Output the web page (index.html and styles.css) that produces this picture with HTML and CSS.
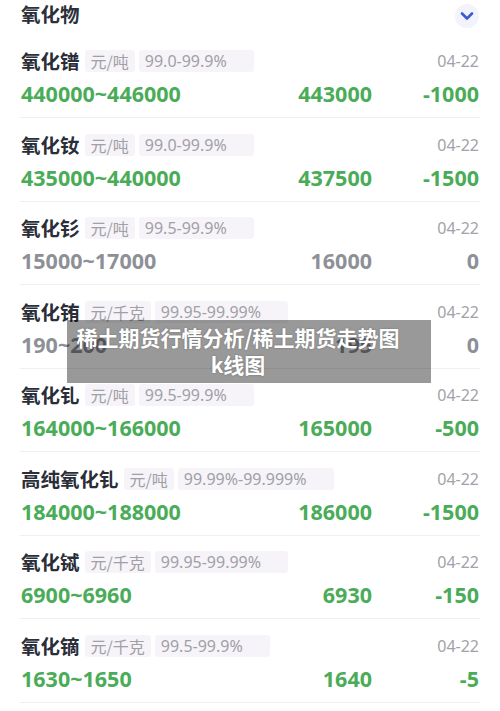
FILE: index.html
```html
<!DOCTYPE html>
<html lang="zh-CN">
<head>
<meta charset="utf-8">
<title>氧化物</title>
<link rel="stylesheet" href="styles.css">
</head>
<body>
<div class="page">
  <div class="header">
    <span class="title">氧化物</span>
    <span class="toggle">
      <svg width="14" height="10" viewBox="0 0 14 10"><path d="M2 2.5 L7 7.5 L12 2.5" fill="none" stroke="#3b5ad6" stroke-width="2.6" stroke-linecap="round" stroke-linejoin="round"/></svg>
    </span>
  </div>
  <div class="list">
    <div class="row">
      <div class="line1"><span class="name">氧化镨</span><span class="tag unit">元/吨</span><span class="tag spec">99.0-99.9%</span><span class="date">04-22</span></div>
      <div class="line2 green"><span>440000~446000</span><span class="mid">443000</span><span class="chg">-1000</span></div>
    </div>
    <div class="row">
      <div class="line1"><span class="name">氧化钕</span><span class="tag unit">元/吨</span><span class="tag spec">99.0-99.9%</span><span class="date">04-22</span></div>
      <div class="line2 green"><span>435000~440000</span><span class="mid">437500</span><span class="chg">-1500</span></div>
    </div>
    <div class="row">
      <div class="line1"><span class="name">氧化钐</span><span class="tag unit">元/吨</span><span class="tag spec">99.5-99.9%</span><span class="date">04-22</span></div>
      <div class="line2 gray"><span>15000~17000</span><span class="mid">16000</span><span class="chg">0</span></div>
    </div>
    <div class="row">
      <div class="line1"><span class="name">氧化铕</span><span class="tag unit">元/千克</span><span class="tag spec">99.95-99.99%</span><span class="date">04-22</span></div>
      <div class="line2 gray"><span>190~200</span><span class="mid">195</span><span class="chg">0</span></div>
    </div>
    <div class="row">
      <div class="line1"><span class="name">氧化钆</span><span class="tag unit">元/吨</span><span class="tag spec">99.5-99.9%</span><span class="date">04-22</span></div>
      <div class="line2 green"><span>164000~166000</span><span class="mid">165000</span><span class="chg">-500</span></div>
    </div>
    <div class="row">
      <div class="line1"><span class="name">高纯氧化钆</span><span class="tag unit">元/吨</span><span class="tag spec">99.99%-99.999%</span><span class="date">04-22</span></div>
      <div class="line2 green"><span>184000~188000</span><span class="mid">186000</span><span class="chg">-1500</span></div>
    </div>
    <div class="row">
      <div class="line1"><span class="name">氧化铽</span><span class="tag unit">元/千克</span><span class="tag spec">99.95-99.99%</span><span class="date">04-22</span></div>
      <div class="line2 green"><span>6900~6960</span><span class="mid">6930</span><span class="chg">-150</span></div>
    </div>
    <div class="row">
      <div class="line1"><span class="name">氧化镝</span><span class="tag unit">元/千克</span><span class="tag spec">99.5-99.9%</span><span class="date">04-22</span></div>
      <div class="line2 green"><span>1630~1650</span><span class="mid">1640</span><span class="chg">-5</span></div>
    </div>
  </div>
  <div class="banner">稀土期货行情分析/稀土期货走势图<br>k线图</div>
</div>
</body>
</html>
```

FILE: styles.css
```css
html, body {
  margin: 0;
  padding: 0;
  background: #ffffff;
}
body {
  font-family: "Noto Sans", "Noto Sans CJK SC", sans-serif;
  width: 500px;
  height: 711px;
  overflow: hidden;
}
.page {
  position: relative;
  height: 711px;
}
.header {
  height: 34.5px;
  box-sizing: border-box;
  padding: 0 21px;
  display: flex;
  align-items: center;
  justify-content: space-between;
  margin-top: -4px;
  margin-bottom: 4px;
}
.title {
  font-family: "Noto Sans CJK SC", sans-serif;
  font-weight: 700;
  font-size: 19.5px;
  color: #2c303a;
}
.toggle {
  width: 24px;
  height: 24px;
  border-radius: 50%;
  background: #f2f3fb;
  display: flex;
  align-items: center;
  justify-content: center;
  margin-top: 5px;
}
.toggle svg {
  display: block;
}
.list {
  padding: 0 20px;
}
.row {
  height: 83.5px;
  box-sizing: border-box;
  border-bottom: 1px solid #efeff1;
  padding: 15.5px 1px 0;
  display: flex;
  flex-direction: column;
}
.line1 {
  height: 22px;
  display: flex;
  align-items: center;
}
.name {
  font-family: "Noto Sans CJK SC", sans-serif;
  font-weight: 700;
  font-size: 19.5px;
  color: #2a2e38;
  margin-right: 5px;
  line-height: 22px;
}
.tag {
  height: 22px;
  line-height: 22px;
  background: #f6f4f8;
  color: #a0a0a6;
  font-size: 16px;
  border-radius: 3px;
  margin-right: 4px;
  box-sizing: border-box;
}
.unit {
  font-family: "Noto Sans CJK SC", sans-serif;
  padding: 0 6px;
}
.spec {
  font-family: "Noto Sans", sans-serif;
  padding: 0 27px 0 6px;
}
.date {
  margin-left: auto;
  font-size: 16px;
  color: #a2a2a8;
}
.line2 {
  margin-top: 8px;
  height: 28px;
  line-height: 28px;
  display: grid;
  grid-template-columns: 1fr auto 107px;
  font-weight: 700;
  font-size: 21.5px;
}
.line2 .mid, .line2 .chg {
  text-align: right;
}
.green {
  color: #4aac58;
}
.gray {
  color: #8e9097;
}
.banner {
  position: absolute;
  left: 67px;
  top: 324px;
  width: 364px;
  height: 63px;
  box-sizing: border-box;
  padding: 4px 30px 0 8px;
  background: rgba(0, 0, 0, 0.4);
  color: #ffffff;
  font-family: "Noto Sans CJK SC", sans-serif;
  font-weight: 700;
  font-size: 21px;
  line-height: 27px;
  text-align: center;
  text-shadow: 0 0 2px rgba(0, 0, 0, 0.3);
}
```
